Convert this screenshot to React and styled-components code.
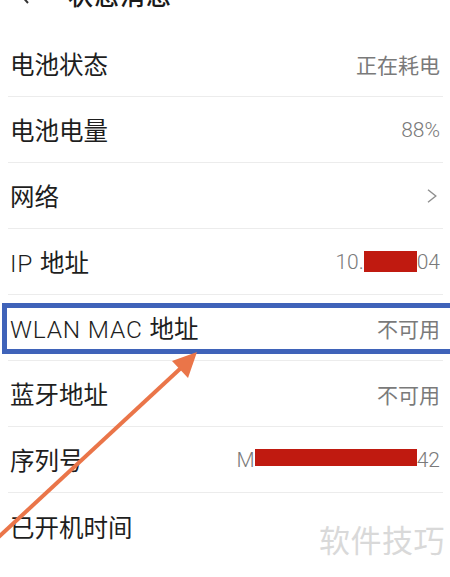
import styled, { createGlobalStyle } from "styled-components";

const GlobalStyle = createGlobalStyle`
  html, body {
    margin: 0;
    padding: 0;
    background: #ffffff;
    overflow: hidden;
  }
  body {
    font-family: "Noto Sans CJK SC", "Noto Sans", sans-serif;
  }
`;

const Screen = styled.div`
  position: relative;
  width: 450px;
  height: 577px;
  overflow: hidden;
  background: #ffffff;
`;

const Page = styled.div`
  display: flex;
  flex-direction: column;
  margin-top: -43px;
`;

const Header = styled.div`
  display: flex;
  align-items: center;
  gap: 38px;
  height: 74px;
  padding: 0 18px;
  color: #1a1a1a;
`;

const BackIcon = styled.svg`
  width: 12px;
  height: 22px;
`;

const Title = styled.span`
  font-size: 25px;
  font-weight: 500;
  letter-spacing: 1px;
`;

const List = styled.div`
  display: flex;
  flex-direction: column;
  padding: 0 7px 0 8px;
`;

const Row = styled.div`
  position: relative;
  display: flex;
  align-items: center;
  justify-content: space-between;
  height: 66px;
  padding: 0 3px 0 2px;
  border-bottom: ${(props) => (props.$last ? "none" : "1px solid #ececec")};
  box-sizing: border-box;
`;

const Label = styled.span`
  font-size: 24.5px;
  font-weight: 400;
  color: #1e1e1e;
  white-space: nowrap;
`;

const Value = styled.span`
  display: flex;
  align-items: center;
  font-size: 21px;
  font-weight: 400;
  color: #7a7a7a;
  white-space: pre;
`;

const Latin = styled.span`
  font-family: Roboto, "Liberation Sans", sans-serif;
  font-weight: 300;
  letter-spacing: ${(props) => props.$spacing || 0}px;
`;

const Redact = styled.span`
  display: inline-block;
  width: ${(props) => props.$w}px;
  height: ${(props) => props.$h}px;
  margin-top: ${(props) => props.$dy || 0}px;
  background: #c01a10;
`;

const Chevron = styled.svg`
  width: 10px;
  height: 14px;
  margin-right: 3px;
`;

const Highlight = styled.div`
  position: absolute;
  left: -6px;
  right: -20px;
  top: 8px;
  bottom: 6px;
  border: 5px solid #3f63b9;
  pointer-events: none;
`;

const Watermark = styled.div`
  position: absolute;
  right: 5px;
  bottom: 16px;
  font-size: 31px;
  font-weight: 400;
  color: #d9d9d9;
  letter-spacing: 0.5px;
`;

const Overlay = styled.svg`
  position: absolute;
  top: 0;
  left: 0;
  width: 450px;
  height: 577px;
  pointer-events: none;
`;

// latin runs get the thin roboto face, cjk stays on noto
function mixed(text, spacing) {
  return text.split(/([\x20-\x7e]+)/).filter(Boolean).map((part, i) =>
    /^[\x20-\x7e]+$/.test(part) ? (
      <Latin key={i} $spacing={spacing}>{part}</Latin>
    ) : (
      part
    )
  );
}

const rows = [
  { label: "电池状态", value: "正在耗电" },
  { label: "电池电量", value: "88%" },
  { label: "网络", chevron: true },
  { label: "IP 地址", ip: true },
  { label: "WLAN MAC 地址", value: "不可用", highlight: true },
  { label: "蓝牙地址", value: "不可用" },
  { label: "序列号", serial: true },
  { label: "已开机时间", last: true },
];

function RowValue({ row }) {
  if (row.chevron) {
    return (
      <Chevron viewBox="0 0 10 14">
        <path d="M1 0.8 L8.8 7 L1 13.2" fill="none" stroke="#8f8f8f" strokeWidth="1.4" />
      </Chevron>
    );
  }
  if (row.ip) {
    return (
      <Value>
        <Latin>10.</Latin>
        <Redact $w={53} $h={21} />
        <Latin>04</Latin>
      </Value>
    );
  }
  if (row.serial) {
    return (
      <Value>
        <Latin>M</Latin>
        <Redact $w={162} $h={17} $dy={-4} />
        <Latin>42</Latin>
      </Value>
    );
  }
  if (row.value) return <Value>{mixed(row.value)}</Value>;
  return null;
}

export default function App() {
  return (
    <Screen>
      <GlobalStyle />
      <Page>
        <Header>
          <BackIcon viewBox="0 0 12 22">
            <path d="M10 2 L2 11 L10 20" fill="none" stroke="#333" strokeWidth="2" />
          </BackIcon>
          <Title>状态消息</Title>
        </Header>
        <List>
          {rows.map((row) => (
            <Row key={row.label} $last={row.last}>
              <Label>{mixed(row.label, 0.8)}</Label>
              <RowValue row={row} />
              {row.highlight && <Highlight />}
            </Row>
          ))}
        </List>
      </Page>
      <Watermark>软件技巧</Watermark>
      <Overlay viewBox="0 0 450 577">
        <line x1="-10" y1="545" x2="182" y2="367" stroke="#ea7549" strokeWidth="4" />
        <polygon points="197,352 172,361 188,378" fill="#ea7549" />
      </Overlay>
    </Screen>
  );
}
